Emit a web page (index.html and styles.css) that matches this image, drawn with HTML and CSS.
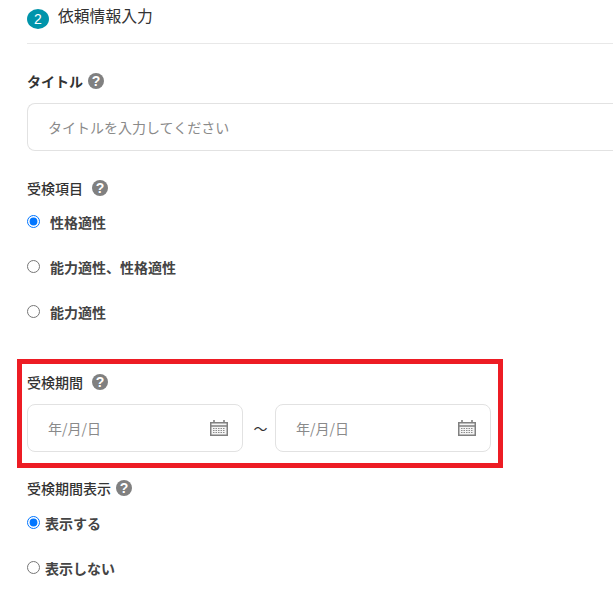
FILE: index.html
```html
<!DOCTYPE html>
<html lang="ja">
<head>
  <meta charset="UTF-8">
  <meta name="viewport" content="width=device-width, initial-scale=1.0">
  <title>依頼情報入力</title>
  <link rel="stylesheet" href="styles.css">
</head>
<body>
  <div class="container">
    <div class="step-head">
      <span class="step-no">2</span>
      <span class="step-title">依頼情報入力</span>
    </div>

    <div class="field field-title">
      <div class="label label-bold">タイトル <span class="help">?</span></div>
      <input class="text-input" type="text" placeholder="タイトルを入力してください">
    </div>

    <div class="field field-items">
      <div class="label label-wide">受検項目 <span class="help">?</span></div>
      <label class="radio radio-wide"><input type="radio" name="item" checked>性格適性</label>
      <label class="radio radio-wide"><input type="radio" name="item">能力適性、性格適性</label>
      <label class="radio radio-wide"><input type="radio" name="item">能力適性</label>
    </div>

    <div class="highlight">
      <div class="label label-wide">受検期間 <span class="help">?</span></div>
      <div class="date-row">
        <div class="date-input">
          <span>年/月/日</span>
          <svg class="cal" width="18" height="16" viewBox="0 0 18 16">
            <path d="M.75 2.75h16.5v12.5H.75z" fill="#f4f4f4" stroke="#808080" stroke-width="1.5"/>
            <path d="M1 6h16" stroke="#808080" stroke-width="1.5"/>
            <path d="M4 0v3M14 0v3" stroke="#808080" stroke-width="1.6"/>
            <path d="M3 8.5h12M3 10.5h12M3 12.5h12" stroke="#8c8c8c" stroke-width="1" stroke-dasharray="1.5 1"/>
          </svg>
        </div>
        <span class="tilde">～</span>
        <div class="date-input">
          <span>年/月/日</span>
          <svg class="cal" width="18" height="16" viewBox="0 0 18 16">
            <path d="M.75 2.75h16.5v12.5H.75z" fill="#f4f4f4" stroke="#808080" stroke-width="1.5"/>
            <path d="M1 6h16" stroke="#808080" stroke-width="1.5"/>
            <path d="M4 0v3M14 0v3" stroke="#808080" stroke-width="1.6"/>
            <path d="M3 8.5h12M3 10.5h12M3 12.5h12" stroke="#8c8c8c" stroke-width="1" stroke-dasharray="1.5 1"/>
          </svg>
        </div>
      </div>
    </div>

    <div class="field field-show">
      <div class="label">受検期間表示 <span class="help">?</span></div>
      <label class="radio"><input type="radio" name="show" checked>表示する</label>
      <label class="radio"><input type="radio" name="show">表示しない</label>
    </div>
  </div>
</body>
</html>
```

FILE: styles.css
```css
html, body {
  margin: 0;
  height: 596px;
  overflow: hidden;
}
body {
  font-family: "Noto Sans CJK JP", "Noto Sans", sans-serif;
  font-size: 14px;
  color: #333;
  background: #fff;
}
.container {
  padding-left: 27px;
}
.step-head {
  display: flex;
  align-items: center;
  gap: 9px;
  height: 43px;
  border-bottom: 1px solid #e8e8e8;
}
.step-no {
  width: 22px;
  height: 20px;
  border-radius: 50%;
  background: #0094aa;
  color: #fff;
  font-size: 14px;
  line-height: 20px;
  text-align: center;
  margin-top: -5px;
  font-family: "Liberation Sans", sans-serif;
}
.step-title {
  font-size: 15.8px;
  line-height: 20px;
  margin-top: -12px;
}
.label {
  display: flex;
  align-items: center;
  gap: 5px;
  height: 20px;
  line-height: 20px;
  font-size: 14px;
  font-weight: 500;
}
.label-bold {
  font-weight: 700;
}
.label-wide {
  gap: 9px;
}
.help {
  width: 16px;
  height: 16px;
  border-radius: 50%;
  background: #808080;
  color: #fff;
  font-family: "Liberation Sans", sans-serif;
  font-size: 14px;
  font-weight: 700;
  line-height: 16px;
  text-align: center;
}
.field-title {
  padding-top: 27px;
}
/* right edge of the field is cut off by the window */
.text-input {
  display: block;
  width: 100%;
  height: 48px;
  margin-top: 12px;
  padding: 0 20px;
  border: 1px solid #e2e2e2;
  border-right: none;
  border-radius: 8px 0 0 8px;
  box-sizing: border-box;
  font: inherit;
  outline: none;
}
.text-input::placeholder {
  color: #8a8a8a;
}
.field-items {
  padding-top: 27px;
}
.radio {
  display: flex;
  align-items: center;
  height: 45px;
  font-weight: 700;
  color: #444;
}
.radio input {
  width: 13px;
  height: 13px;
  margin: 0 5px 0 0;
}
.radio-wide input {
  margin-right: 10px;
}
.field-items .label + .radio {
  margin-top: 1px;
}
.highlight {
  width: 486px;
  height: 109px;
  margin: 25px 0 0 -10px;
  padding: 8px 0 0 5px;
  border: 5px solid #ed1c24;
  box-sizing: border-box;
}
.date-row {
  display: flex;
  align-items: center;
  margin-top: 12px;
}
.date-input {
  display: flex;
  align-items: center;
  justify-content: space-between;
  width: 216px;
  height: 48px;
  padding: 0 14px 0 20px;
  border: 1px solid #e2e2e2;
  border-radius: 8px;
  box-sizing: border-box;
  color: #8a8a8a;
}
.cal {
  flex: none;
}
.tilde {
  width: 32px;
  padding-left: 3px;
  box-sizing: border-box;
  text-align: center;
  font-size: 14px;
}
.field-show {
  padding-top: 10px;
}
.field-show .label + .radio {
  margin-top: 2px;
}
```
